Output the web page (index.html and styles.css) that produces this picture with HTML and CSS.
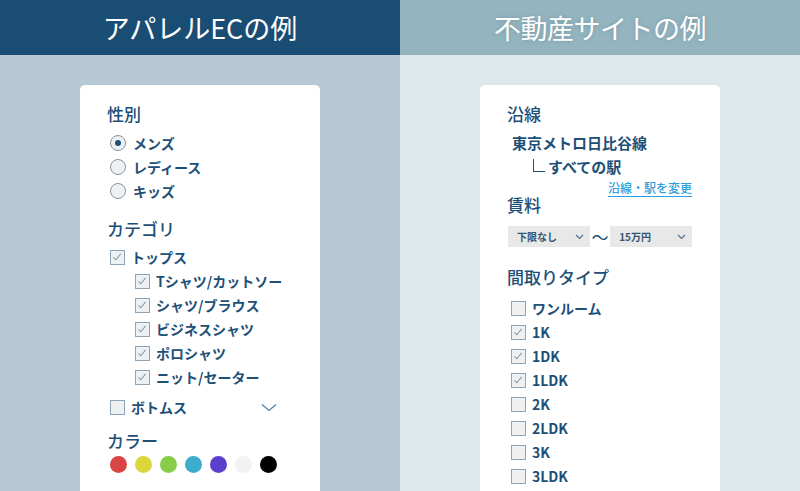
FILE: index.html
```html
<!DOCTYPE html>
<html lang="ja">
<head>
    <meta charset="UTF-8">
    <meta name="viewport" content="width=device-width, initial-scale=1.0">
    <title>絞り込み検索の例</title>
    <link rel="stylesheet" href="styles.css">
</head>
<body>
    <div class="compare">
        <!-- アパレルEC -->
        <section class="panel panel-ec">
            <h1 class="panel-title">アパレルECの例</h1>
            <div class="panel-body">
                <div class="card">
                    <h2 class="group-title">性別</h2>
                    <ul class="opt-list gender">
                        <li class="opt"><span class="radio checked"></span>メンズ</li>
                        <li class="opt"><span class="radio"></span>レディース</li>
                        <li class="opt"><span class="radio"></span>キッズ</li>
                    </ul>

                    <h2 class="group-title category-title">カテゴリ</h2>
                    <ul class="opt-list category">
                        <li class="opt"><span class="check checked"></span>トップス</li>
                        <li class="opt sub"><span class="check checked"></span>Tシャツ/カットソー</li>
                        <li class="opt sub"><span class="check checked"></span>シャツ/ブラウス</li>
                        <li class="opt sub"><span class="check checked"></span>ビジネスシャツ</li>
                        <li class="opt sub"><span class="check checked"></span>ポロシャツ</li>
                        <li class="opt sub"><span class="check checked"></span>ニット/セーター</li>
                        <li class="opt folded">
                            <span class="check"></span>ボトムス
                            <svg class="fold-icon" width="16" height="9" viewBox="0 0 16 9"><path d="M1 1.5 8 7.5 15 1.5" fill="none" stroke="#5b7e9c" stroke-width="1.3"/></svg>
                        </li>
                    </ul>

                    <h2 class="group-title color-title">カラー</h2>
                    <div class="swatches">
                        <span class="swatch" style="background:#d94545"></span>
                        <span class="swatch" style="background:#dcd63c"></span>
                        <span class="swatch" style="background:#88cc48"></span>
                        <span class="swatch" style="background:#3caccd"></span>
                        <span class="swatch" style="background:#5c3fcc"></span>
                        <span class="swatch" style="background:#f2f2f2"></span>
                        <span class="swatch" style="background:#000000"></span>
                    </div>
                </div>
            </div>
        </section>

        <!-- 不動産サイト -->
        <section class="panel panel-estate">
            <h1 class="panel-title">不動産サイトの例</h1>
            <div class="panel-body">
                <div class="card">
                    <h2 class="group-title">沿線</h2>
                    <div class="line-name">東京メトロ日比谷線</div>
                    <div class="station"><span class="branch"></span>すべての駅</div>
                    <div class="change-row"><a href="#" class="change-link">沿線・駅を変更</a></div>

                    <h2 class="group-title rent-title">賃料</h2>
                    <div class="rent">
                        <div class="select"><span>下限なし</span><svg width="9" height="6" viewBox="0 0 9 6"><path d="M1 1 4.5 4.5 8 1" fill="none" stroke="#4f6f8c" stroke-width="1.2"/></svg></div>
                        <span class="tilde">〜</span>
                        <div class="select"><span>15万円</span><svg width="9" height="6" viewBox="0 0 9 6"><path d="M1 1 4.5 4.5 8 1" fill="none" stroke="#4f6f8c" stroke-width="1.2"/></svg></div>
                    </div>

                    <h2 class="group-title layout-title">間取りタイプ</h2>
                    <ul class="opt-list layouts">
                        <li class="opt"><span class="check"></span>ワンルーム</li>
                        <li class="opt"><span class="check checked"></span>1K</li>
                        <li class="opt"><span class="check checked"></span>1DK</li>
                        <li class="opt"><span class="check checked"></span>1LDK</li>
                        <li class="opt"><span class="check"></span>2K</li>
                        <li class="opt"><span class="check"></span>2LDK</li>
                        <li class="opt"><span class="check"></span>3K</li>
                        <li class="opt"><span class="check"></span>3LDK</li>
                    </ul>
                </div>
            </div>
        </section>
    </div>
</body>
</html>
```

FILE: styles.css
```css
/* 2カラムの比較レイアウト */
body {
    margin: 0;
    font-family: "Noto Sans CJK JP", "Noto Sans", sans-serif;
    color: #1d4f77;
    height: 491px;
    overflow: hidden;
}
.compare {
    display: grid;
    grid-template-columns: 1fr 1fr;
    height: 100%;
}
.panel {
    display: flex;
    flex-direction: column;
}
.panel-title {
    margin: 0;
    height: 55px;
    display: flex;
    align-items: center;
    justify-content: center;
    font-size: 27px;
    font-weight: 400;
    color: #fff;
}
.panel-ec .panel-title {
    background-color: #1a4d73;
}
.panel-estate .panel-title {
    background-color: #94b5bf;
    letter-spacing: -0.5px;
    text-shadow: 0 0 4px rgba(40, 70, 90, 0.25);
}
.panel-body {
    flex: 1;
    padding-top: 30px;
}
.panel-ec .panel-body {
    background-color: #b8c9d6;
}
.panel-estate .panel-body {
    background-color: #dce8eb;
}

/* カード */
.card {
    width: 240px;
    height: 420px;
    margin: 0 auto;
    box-sizing: border-box;
    padding: 17px 28px 0 27px;
    background: #fff;
    border-radius: 5px;
}
.group-title {
    margin: 0;
    font-size: 17px;
    font-weight: 500;
    line-height: 24px;
}
.category-title { margin-top: 14px; }
.color-title { margin-top: 10px; }
.rent-title { margin-top: -1px; }
.layout-title { margin-top: 18px; }

/* 選択肢 */
.opt-list {
    list-style: none;
    margin: 5px 0 0;
    padding: 0 0 0 3px;
}
.opt-list.category { margin-top: 4px; }
.opt-list.layouts { margin-top: 7px; padding-left: 4px; }
.opt {
    display: flex;
    align-items: center;
    height: 24px;
    font-size: 14px;
    font-weight: 700;
}
.opt.sub {
    padding-left: 25px;
}
.opt.folded {
    margin-top: 6px;
}
.fold-icon {
    margin-left: auto;
    margin-right: 15px;
}
.radio {
    width: 16px;
    height: 16px;
    box-sizing: border-box;
    border: 1.3px solid #8096aa;
    border-radius: 50%;
    background: #eff0f2;
    margin-right: 7px;
    position: relative;
}
.radio.checked::after {
    content: "";
    position: absolute;
    left: 3.5px;
    top: 3.5px;
    width: 6.5px;
    height: 6.5px;
    border-radius: 50%;
    background: #1d4f77;
}
.check {
    width: 15px;
    height: 15px;
    box-sizing: border-box;
    border: 1.5px solid #8ca3b8;
    background: #eff0f2;
    margin-right: 6px;
    position: relative;
    flex-shrink: 0;
}
.check.checked::after {
    content: "";
    position: absolute;
    left: 4px;
    top: 1.5px;
    width: 3px;
    height: 7px;
    border: solid #7e98ad;
    border-width: 0 1px 1px 0;
    transform: rotate(40deg);
}

/* カラー */
.swatches {
    display: flex;
    gap: 8px;
    margin: 3px 0 0 3px;
}
.swatch {
    width: 17px;
    height: 17px;
    border-radius: 50%;
}

/* 沿線 */
.line-name {
    margin: 5px 0 0 5px;
    font-size: 15px;
    font-weight: 700;
    line-height: 24px;
}
.station {
    display: flex;
    align-items: center;
    height: 23px;
    margin-left: 26px;
    font-size: 15px;
    font-weight: 700;
}
/* 駅の枝線 */
.branch {
    width: 11px;
    height: 12px;
    margin: -3px 3px 0 0;
    border-left: 1.2px solid #1d4f77;
    border-bottom: 1.2px solid #1d4f77;
}
.change-row {
    display: flex;
    justify-content: flex-end;
    align-items: center;
    height: 12px;
    margin-top: 4px;
    font-size: 12px;
}
.change-link {
    font-size: 12px;
    font-weight: 500;
    line-height: 12px;
    color: #2c9fdc;
    text-decoration: underline;
    text-underline-offset: 3px;
}

/* 賃料 */
.rent {
    display: flex;
    align-items: center;
    height: 21px;
    margin-top: 9px;
    margin-left: 1px;
}
.select {
    width: 84px;
    height: 21px;
    box-sizing: border-box;
    background: #e8e8e8;
    display: flex;
    align-items: center;
    justify-content: space-between;
    padding: 0 6px 0 9px;
    font-size: 10px;
    font-weight: 700;
    color: #35536e;
}
.tilde {
    width: 21px;
    text-align: center;
    font-size: 17px;
    font-weight: 400;
    line-height: 21px;
}
```
